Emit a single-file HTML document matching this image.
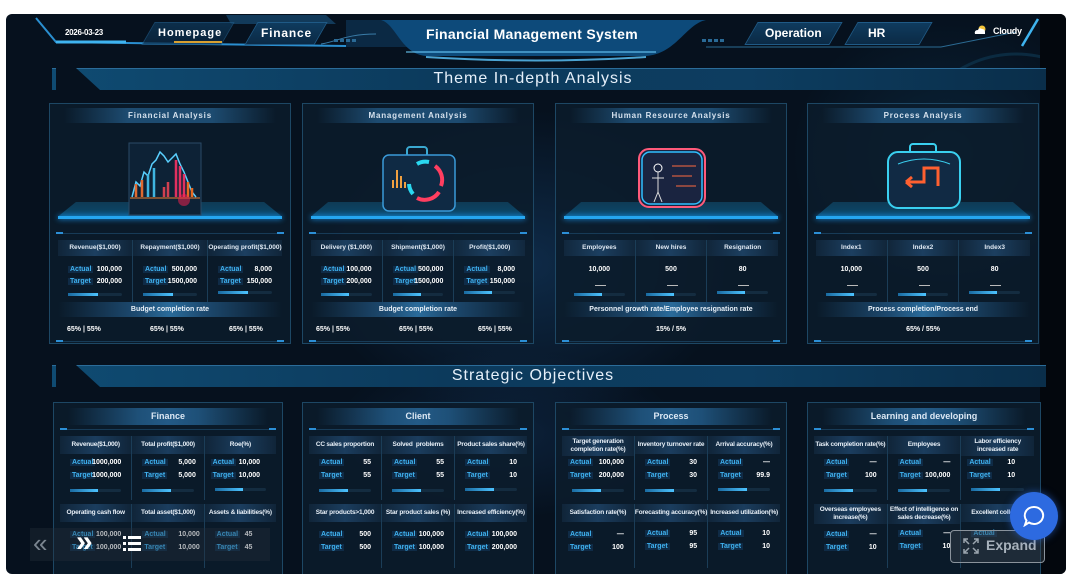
<!DOCTYPE html>
<html><head><meta charset="utf-8"><style>
*{margin:0;padding:0;box-sizing:border-box}
body{width:1072px;height:563px;background:#fff;overflow:hidden;font-family:"Liberation Sans",sans-serif;position:relative}
#app{position:absolute;left:6px;top:14px;width:1060px;height:560px;border-radius:6px;overflow:hidden;
background:radial-gradient(ellipse 300px 220px at 520px 250px,rgba(30,90,150,.35),transparent 70%),radial-gradient(ellipse 220px 200px at 940px 140px,rgba(20,80,120,.3),transparent 70%),radial-gradient(ellipse 250px 120px at 500px 420px,rgba(30,80,140,.25),transparent 70%),#06111e}
.abs{position:absolute}
.t{color:#fff;font-weight:bold;white-space:nowrap}
.tab{position:absolute;top:8px;height:23px;background:linear-gradient(#0f3b5e,#0b2a45);transform:skewX(-30deg);border:1px solid #1f5a86}
.sec{position:absolute;left:46px;width:994px;height:22px;background:linear-gradient(90deg,#0f4b72 0%,#0c3a5c 40%,#0d3d60 70%,#0a2e4a 100%);border-top:1px solid #2b6c99}
.sec span{position:absolute;left:0;right:32px;text-align:center;color:#e6f0fa;font-size:16px;letter-spacing:1px;top:1px}
.card{position:absolute;top:89px;height:241px;background:rgba(12,28,44,.85);border:1px solid #1d4764}
.ctitle{position:absolute;left:14px;right:14px;top:4px;height:15px;background:linear-gradient(90deg,transparent,#1d4b70 30%,#1d4b70 70%,transparent);color:#d6e2ee;font-size:8px;font-weight:bold;letter-spacing:.8px;text-align:center;line-height:15px}
.tick{position:absolute;left:6px;right:6px;height:1px;background:#173b57}
.tick:before,.tick:after{content:"";position:absolute;top:-1px;width:7px;height:2px;background:#2c8fd6}
.tick:before{left:0}.tick:after{right:0}
.plat{position:absolute;left:8px;right:8px;top:98px;height:17px;background:linear-gradient(#0e3a55,#0b4d72);clip-path:polygon(8% 0,92% 0,100% 85%,0 85%)}
.platl{position:absolute;left:8px;right:8px;top:112px;height:3px;background:#25a6f0;box-shadow:0 0 6px #1aa0ff}
.cols{position:absolute;left:8px;right:8px;display:flex}
.col{flex:1;position:relative;height:64px;border-right:1px solid #1b3d57}
.col:last-child{border-right:none}
.hd{height:16px;background:linear-gradient(90deg,rgba(40,80,120,.2),#1c3f60,rgba(40,80,120,.2));color:#dfe8f2;font-size:6.5px;font-weight:bold;text-align:center;line-height:16px;white-space:nowrap;overflow:hidden}
.row{position:absolute;left:10px;right:10px;font-size:7px;font-weight:bold;height:10px}
.row .k{position:absolute;left:0;color:#3fb1ee;background:rgba(20,60,100,.5);padding:0 2px}
.row .v{position:absolute;right:0;color:#fff}
.bar{position:absolute;left:10px;right:10px;height:3px;background:#142c40;border-radius:2px}
.bar:before{content:"";position:absolute;left:0;top:0;height:3px;width:55%;background:linear-gradient(90deg,#1a6aa0,#4cc3ff)}
.band{position:absolute;left:8px;right:8px;height:15px;background:linear-gradient(90deg,transparent,#1d4a70 35%,#2a6b9a 50%,#1d4a70 65%,transparent);color:#e8f0f8;font-size:7px;font-weight:bold;text-align:center;line-height:15px}
.pc{position:absolute;font-size:7px;font-weight:bold;color:#fff;white-space:nowrap}
.bcard{position:absolute;top:388px;height:175px;background:rgba(12,28,44,.85);border:1px solid #1d4764}
.btitle{position:absolute;left:14px;right:14px;top:5px;height:17px;background:linear-gradient(90deg,transparent,#1e5078 35%,#235a86 50%,#1e5078 65%,transparent);color:#dce8f4;font-size:9px;font-weight:bold;text-align:center;line-height:17px}
.bcols{position:absolute;left:6px;right:6px;display:flex}
.bcol{flex:1;position:relative;height:64px;border-right:1px solid #1b3d57}
.bcol:last-child{border-right:none}
.bh{height:18px;background:linear-gradient(90deg,rgba(40,80,120,.2),#1b3d5e,rgba(40,80,120,.2));color:#e6eef6;font-size:6.5px;font-weight:bold;text-align:center;line-height:8px;display:flex;align-items:center;justify-content:center;white-space:nowrap;letter-spacing:-.2px}
</style></head><body>
<div id="app">
<svg class="abs" style="left:0;top:0" width="1060" height="60">
<path d="M30 4 L50 28 L340 32" stroke="#2a8fd0" stroke-width="2" fill="none"/>
<path d="M50 28 L120 28" stroke="#3fb4f0" stroke-width="3"/>
<path d="M220 1 L320 1 L330 10 L225 10Z" fill="#123a5a"/>
<path d="M340 6 L395 6 L410 33 L340 33Z" fill="#0c2c48" opacity=".9"/>
<path d="M375 6 C390 10 395 40 420 42 L640 42 C670 40 680 10 700 6Z" fill="#0d4a7a"/>
<path d="M400 38 L650 38" stroke="#6fd0ff" stroke-width="1.5" opacity=".7"/>
<path d="M420 43 Q530 50 640 43" stroke="#5cc8ff" stroke-width="2" fill="none" opacity=".8"/>
<path d="M315 30 C330 28 340 20 370 20" stroke="#3a7ca8" fill="none"/>
<path d="M700 33 L935 33 L1010 18" stroke="#2b6a92" fill="none"/>
<path d="M1032 5 L1016 32" stroke="#3fb4f0" stroke-width="2.5"/>
<g fill="#2a6a96"><rect x="328" y="25" width="4" height="3"/><rect x="334" y="25" width="4" height="3"/><rect x="340" y="25" width="4" height="3"/><rect x="346" y="25" width="4" height="3"/><rect x="696" y="25" width="4" height="3"/><rect x="702" y="25" width="4" height="3"/><rect x="708" y="25" width="4" height="3"/><rect x="714" y="25" width="4" height="3"/></g>
<circle cx="1010" cy="150" r="110" stroke="#0f3a55" stroke-width="3" fill="none" opacity=".6"/>
</svg>
<div class="tab" style="left:142px;width:80px;opacity:.7"></div>
<div class="tab" style="left:245px;width:70px"></div>
<div class="tab" style="left:745px;width:85px"></div>
<div class="tab" style="left:845px;width:75px"></div>
<div class="abs t" style="left:59px;top:14px;font-size:8px;letter-spacing:-.3px">2026-03-23</div>
<div class="abs t" style="left:152px;top:13px;font-size:11px;letter-spacing:1px">Homepage</div>
<div class="abs" style="left:168px;top:27px;width:48px;height:1.5px;background:#d8a030"></div>
<div class="abs t" style="left:255px;top:12px;font-size:12px;letter-spacing:.8px">Finance</div>
<div class="abs t" style="left:420px;top:12px;font-size:14px;letter-spacing:.3px">Financial Management System</div>
<div class="abs t" style="left:759px;top:12px;font-size:12px">Operation</div>
<div class="abs t" style="left:862px;top:12px;font-size:12px">HR</div>
<svg class="abs" style="left:967px;top:11px" width="14" height="10"><circle cx="9" cy="4" r="3.5" fill="#f3c53a"/><path d="M2 9 Q1 5 5 5 Q6 2 9 4 Q12 4 12 7 L12 9Z" fill="#fff"/></svg>
<div class="abs t" style="left:987px;top:12px;font-size:9px;letter-spacing:-.3px">Cloudy</div>
<div class="abs" style="left:1034px;top:0;width:26px;height:560px;background:#03070d"></div>

<div class="sec" style="top:54px"><span>Theme In-depth Analysis</span></div>
<div class="abs" style="left:50px;top:54px;width:80px;height:22px;background:#06111e;clip-path:polygon(0 0,25% 0,55% 100%,0 100%)"></div>
<div class="sec" style="top:351px"><span>Strategic Objectives</span></div>
<div class="abs" style="left:50px;top:351px;width:80px;height:22px;background:#06111e;clip-path:polygon(0 0,25% 0,55% 100%,0 100%)"></div>

<div class="card" style="left:43px;width:242px">
 <div class="ctitle">Financial Analysis</div>
 <div class="plat"></div><div class="platl"></div>
 <svg class="abs" style="left:78px;top:38px" width="74" height="76"><rect x="1" y="1" width="72" height="72" fill="#0d2236" stroke="#2a4a66"/>
 <path d="M4 55 L8 40 L12 44 L16 30 L20 34 L24 22 L28 18 L32 10 L36 14 L40 20 L44 16 L48 12 L52 22 L56 30 L60 40 L64 50 L68 55" stroke="#5ad0ff" stroke-width="1.5" fill="none"/>
 <g stroke-width="2.5"><path d="M8 55V42M14 55V38" stroke="#e06a30"/><path d="M20 55V32M26 55V26" stroke="#3fb5e0"/><path d="M48 55V18M52 55V24M56 55V32" stroke="#e03060"/><path d="M60 55V40M64 55V46" stroke="#e86a20"/><path d="M36 55V45M40 55V40" stroke="#d04050"/></g>
 <line x1="2" y1="56" x2="72" y2="56" stroke="#f08030"/><circle cx="56" cy="58" r="6" fill="#ff2050" opacity=".5"/></svg>
 <div class="tick" style="top:129px"></div>
 <div class="cols" style="top:136px">
  <div class="col"><div class="hd">Revenue($1,000)</div><div class="row" style="top:26px"><span class="k">Actual</span><span class="v">100,000</span></div><div class="row" style="top:38px"><span class="k">Target</span><span class="v">200,000</span></div><div class="bar" style="top:53px"></div></div>
  <div class="col"><div class="hd">Repayment($1,000)</div><div class="row" style="top:26px"><span class="k">Actual</span><span class="v">500,000</span></div><div class="row" style="top:38px"><span class="k">Target</span><span class="v">1500,000</span></div><div class="bar" style="top:53px"></div></div>
  <div class="col"><div class="hd">Operating profit($1,000)</div><div class="row" style="top:26px"><span class="k">Actual</span><span class="v">8,000</span></div><div class="row" style="top:38px"><span class="k">Target</span><span class="v">150,000</span></div><div class="bar" style="top:51px"></div></div>
 </div>
 <div class="band" style="top:198px">Budget completion rate</div>
 <div class="pc" style="left:17px;top:222px">65% | 55%</div><div class="pc" style="left:100px;top:222px">65% | 55%</div><div class="pc" style="left:179px;top:222px">65% | 55%</div>
 <div class="tick" style="top:237px"></div>
</div>
<div class="card" style="left:296px;width:232px">
 <div class="ctitle">Management Analysis</div>
 <div class="plat"></div><div class="platl"></div>
 <svg class="abs" style="left:78px;top:42px" width="76" height="68"><rect x="26" y="1" width="20" height="10" rx="3" fill="none" stroke="#3aa8d0" stroke-width="2"/><rect x="2" y="9" width="72" height="56" rx="6" fill="#0f2a44" stroke="#3a9ad8" stroke-width="1.5"/>
 <path d="M54 20 A17 17 0 0 1 60 40" stroke="#ff3e60" stroke-width="4" fill="none"/><path d="M58 46 A17 17 0 0 1 36 52" stroke="#ff3e60" stroke-width="4" fill="none"/><path d="M32 48 A17 17 0 0 1 28 38" stroke="#2ad8f0" stroke-width="4" fill="none"/><path d="M36 18 A17 17 0 0 1 48 16" stroke="#2ad8f0" stroke-width="4" fill="none"/>
 <g stroke="#f0a040" stroke-width="2"><path d="M12 42V34M16 42V24M20 42V30M24 42V36"/></g></svg>
 <div class="tick" style="top:129px"></div>
 <div class="cols" style="top:136px">
  <div class="col"><div class="hd">Delivery ($1,000)</div><div class="row" style="top:26px"><span class="k">Actual</span><span class="v">100,000</span></div><div class="row" style="top:38px"><span class="k">Target</span><span class="v">200,000</span></div><div class="bar" style="top:53px"></div></div>
  <div class="col"><div class="hd">Shipment($1,000)</div><div class="row" style="top:26px"><span class="k">Actual</span><span class="v">500,000</span></div><div class="row" style="top:38px"><span class="k">Target</span><span class="v">1500,000</span></div><div class="bar" style="top:53px"></div></div>
  <div class="col"><div class="hd">Profit($1,000)</div><div class="row" style="top:26px"><span class="k">Actual</span><span class="v">8,000</span></div><div class="row" style="top:38px"><span class="k">Target</span><span class="v">150,000</span></div><div class="bar" style="top:51px"></div></div>
 </div>
 <div class="band" style="top:198px">Budget completion rate</div>
 <div class="pc" style="left:13px;top:222px">65% | 55%</div><div class="pc" style="left:96px;top:222px">65% | 55%</div><div class="pc" style="left:175px;top:222px">65% | 55%</div>
 <div class="tick" style="top:237px"></div>
</div>
<div class="card" style="left:549px;width:232px">
 <div class="ctitle">Human Resource Analysis</div>
 <div class="plat"></div><div class="platl"></div>
 <svg class="abs" style="left:80px;top:42px" width="72" height="66"><rect x="3" y="3" width="66" height="58" rx="10" fill="#1a2440" stroke="#ff5a7a" stroke-width="2"/><rect x="6" y="6" width="60" height="52" rx="8" fill="none" stroke="#30c0ff" stroke-width="1.5"/>
 <circle cx="22" cy="22" r="4" fill="none" stroke="#fff"/><path d="M22 26V46M16 32H28M22 46L18 56M22 46L26 56" stroke="#ddd" fill="none"/><path d="M36 20H60M36 30H56M40 40H60" stroke="#ff6a40"/></svg>
 <div class="tick" style="top:129px"></div>
 <div class="cols" style="top:136px">
  <div class="col"><div class="hd">Employees</div><div class="row" style="top:26px;text-align:center"><span class="v" style="left:0;right:0">10,000</span></div><div class="abs" style="left:31px;top:45px;width:11px;height:1px;background:#bbb"></div><div class="bar" style="top:53px"></div></div>
  <div class="col"><div class="hd">New hires</div><div class="row" style="top:26px;text-align:center"><span class="v" style="left:0;right:0">500</span></div><div class="abs" style="left:31px;top:45px;width:11px;height:1px;background:#bbb"></div><div class="bar" style="top:53px"></div></div>
  <div class="col"><div class="hd">Resignation</div><div class="row" style="top:26px;text-align:center"><span class="v" style="left:0;right:0">80</span></div><div class="abs" style="left:31px;top:45px;width:11px;height:1px;background:#bbb"></div><div class="bar" style="top:51px"></div></div>
 </div>
 <div class="band" style="top:198px">Personnel growth rate/Employee resignation rate</div>
 <div class="pc" style="left:0;right:0;text-align:center;top:222px">15% / 5%</div>
 <div class="tick" style="top:237px"></div>
</div>
<div class="card" style="left:801px;width:232px">
 <div class="ctitle">Process Analysis</div>
 <div class="plat"></div><div class="platl"></div>
 <svg class="abs" style="left:76px;top:38px" width="80" height="72"><rect x="26" y="2" width="26" height="10" rx="3" fill="none" stroke="#3ad0f0" stroke-width="2"/><rect x="4" y="10" width="72" height="56" rx="10" fill="#112a44" stroke="#3ad0f0" stroke-width="2"/>
 <path d="M22 40H40V26H54V44M22 40l6-5M22 40l6 5" stroke="#ff6030" stroke-width="3" fill="none"/><path d="M14 22 Q40 12 66 22" stroke="#3ad0f0" fill="none"/></svg>
 <div class="tick" style="top:129px"></div>
 <div class="cols" style="top:136px">
  <div class="col"><div class="hd">Index1</div><div class="row" style="top:26px;text-align:center"><span class="v" style="left:0;right:0">10,000</span></div><div class="abs" style="left:31px;top:45px;width:11px;height:1px;background:#bbb"></div><div class="bar" style="top:53px"></div></div>
  <div class="col"><div class="hd">Index2</div><div class="row" style="top:26px;text-align:center"><span class="v" style="left:0;right:0">500</span></div><div class="abs" style="left:31px;top:45px;width:11px;height:1px;background:#bbb"></div><div class="bar" style="top:53px"></div></div>
  <div class="col"><div class="hd">Index3</div><div class="row" style="top:26px;text-align:center"><span class="v" style="left:0;right:0">80</span></div><div class="abs" style="left:31px;top:45px;width:11px;height:1px;background:#bbb"></div><div class="bar" style="top:51px"></div></div>
 </div>
 <div class="band" style="top:198px">Process completion/Process end</div>
 <div class="pc" style="left:0;right:0;text-align:center;top:222px">65% / 55%</div>
 <div class="tick" style="top:237px"></div>
</div>

<div class="bcard" style="left:47px;width:230px">
 <div class="btitle">Finance</div><div class="tick" style="top:26px"></div>
 <div class="bcols" style="top:33px">
  <div class="bcol"><div class="bh">Revenue($1,000)</div><div class="row" style="top:23px"><span class="k">Actual</span><span class="v">1000,000</span></div><div class="row" style="top:36px"><span class="k">Target</span><span class="v">1000,000</span></div><div class="bar" style="top:53px"></div></div>
  <div class="bcol"><div class="bh">Total profit($1,000)</div><div class="row" style="top:23px"><span class="k">Actual</span><span class="v" style="left:36px">5,000</span></div><div class="row" style="top:36px"><span class="k">Target</span><span class="v" style="left:36px">5,000</span></div><div class="bar" style="top:53px"></div></div>
  <div class="bcol"><div class="bh">Roe(%)</div><div class="row" style="top:23px;left:6px"><span class="k">Actual</span><span class="v" style="left:28px">10,000</span></div><div class="row" style="top:36px;left:6px"><span class="k">Target</span><span class="v" style="left:28px">10,000</span></div><div class="bar" style="top:52px"></div></div>
 </div>
 <div class="bcols" style="top:101px">
  <div class="bcol"><div class="bh">Operating cash flow</div><div class="row" style="top:27px"><span class="k">Actual</span><span class="v">100,000</span></div><div class="row" style="top:40px"><span class="k">Target</span><span class="v">100,000</span></div></div>
  <div class="bcol"><div class="bh">Total asset($1,000)</div><div class="row" style="top:27px"><span class="k">Actual</span><span class="v" style="left:36px">10,000</span></div><div class="row" style="top:40px"><span class="k">Target</span><span class="v" style="left:36px">10,000</span></div></div>
  <div class="bcol"><div class="bh">Assets &amp; liabilities(%)</div><div class="row" style="top:27px"><span class="k">Actual</span><span class="v" style="left:30px">45</span></div><div class="row" style="top:40px"><span class="k">Target</span><span class="v" style="left:30px">45</span></div></div>
 </div>
</div>
<div class="bcard" style="left:296px;width:232px">
 <div class="btitle">Client</div><div class="tick" style="top:26px"></div>
 <div class="bcols" style="top:33px">
  <div class="bcol"><div class="bh">CC sales proportion</div><div class="row" style="top:23px"><span class="k">Actual</span><span class="v">55</span></div><div class="row" style="top:36px"><span class="k">Target</span><span class="v">55</span></div><div class="bar" style="top:53px"></div></div>
  <div class="bcol"><div class="bh">Solved &nbsp;problems</div><div class="row" style="top:23px"><span class="k">Actual</span><span class="v">55</span></div><div class="row" style="top:36px"><span class="k">Target</span><span class="v">55</span></div><div class="bar" style="top:53px"></div></div>
  <div class="bcol"><div class="bh">Product sales share(%)</div><div class="row" style="top:23px"><span class="k">Actual</span><span class="v">10</span></div><div class="row" style="top:36px"><span class="k">Target</span><span class="v">10</span></div><div class="bar" style="top:52px"></div></div>
 </div>
 <div class="bcols" style="top:101px">
  <div class="bcol"><div class="bh">Star products&gt;1,000</div><div class="row" style="top:27px"><span class="k">Actual</span><span class="v">500</span></div><div class="row" style="top:40px"><span class="k">Target</span><span class="v">500</span></div></div>
  <div class="bcol"><div class="bh">Star product sales (%)</div><div class="row" style="top:27px"><span class="k">Actual</span><span class="v">100,000</span></div><div class="row" style="top:40px"><span class="k">Target</span><span class="v">100,000</span></div></div>
  <div class="bcol"><div class="bh">Increased efficiency(%)</div><div class="row" style="top:27px"><span class="k">Actual</span><span class="v">100,000</span></div><div class="row" style="top:40px"><span class="k">Target</span><span class="v">200,000</span></div></div>
 </div>
</div>
<div class="bcard" style="left:549px;width:232px">
 <div class="btitle">Process</div><div class="tick" style="top:26px"></div>
 <div class="bcols" style="top:33px">
  <div class="bcol"><div class="bh" style="white-space:normal;height:20px">Target generation completion rate(%)</div><div class="row" style="top:23px;left:6px"><span class="k">Actual</span><span class="v">100,000</span></div><div class="row" style="top:36px;left:6px"><span class="k">Target</span><span class="v">200,000</span></div><div class="bar" style="top:53px"></div></div>
  <div class="bcol"><div class="bh">Inventory turnover rate</div><div class="row" style="top:23px"><span class="k">Actual</span><span class="v">30</span></div><div class="row" style="top:36px"><span class="k">Target</span><span class="v">30</span></div><div class="bar" style="top:53px"></div></div>
  <div class="bcol"><div class="bh">Arrival accuracy(%)</div><div class="row" style="top:23px"><span class="k">Actual</span><span class="v">—</span></div><div class="row" style="top:36px"><span class="k">Target</span><span class="v">99.9</span></div><div class="bar" style="top:52px"></div></div>
 </div>
 <div class="bcols" style="top:101px">
  <div class="bcol"><div class="bh">Satisfaction rate(%)</div><div class="row" style="top:27px;left:6px"><span class="k">Actual</span><span class="v">—</span></div><div class="row" style="top:40px;left:6px"><span class="k">Target</span><span class="v">100</span></div></div>
  <div class="bcol"><div class="bh">Forecasting accuracy(%)</div><div class="row" style="top:26px"><span class="k">Actual</span><span class="v">95</span></div><div class="row" style="top:39px"><span class="k">Target</span><span class="v">95</span></div></div>
  <div class="bcol"><div class="bh">Increased utilization(%)</div><div class="row" style="top:26px"><span class="k">Actual</span><span class="v">10</span></div><div class="row" style="top:39px"><span class="k">Target</span><span class="v">10</span></div></div>
 </div>
</div>
<div class="bcard" style="left:801px;width:234px">
 <div class="btitle">Learning and developing</div><div class="tick" style="top:26px"></div>
 <div class="bcols" style="top:33px">
  <div class="bcol"><div class="bh">Task completion rate(%)</div><div class="row" style="top:23px"><span class="k">Actual</span><span class="v">—</span></div><div class="row" style="top:36px"><span class="k">Target</span><span class="v">100</span></div><div class="bar" style="top:53px"></div></div>
  <div class="bcol"><div class="bh">Employees</div><div class="row" style="top:23px"><span class="k">Actual</span><span class="v">—</span></div><div class="row" style="top:36px"><span class="k">Target</span><span class="v">100,000</span></div><div class="bar" style="top:53px"></div></div>
  <div class="bcol"><div class="bh" style="white-space:normal;height:20px">Labor efficiency increased rate</div><div class="row" style="top:23px;left:6px"><span class="k">Actual</span><span class="v" style="left:40px">10</span></div><div class="row" style="top:36px;left:6px"><span class="k">Target</span><span class="v" style="left:40px">10</span></div><div class="bar" style="top:52px"></div></div>
 </div>
 <div class="bcols" style="top:101px">
  <div class="bcol"><div class="bh" style="white-space:normal;height:20px">Overseas employees increase(%)</div><div class="row" style="top:27px"><span class="k">Actual</span><span class="v">—</span></div><div class="row" style="top:40px"><span class="k">Target</span><span class="v">10</span></div></div>
  <div class="bcol"><div class="bh" style="white-space:normal;height:20px">Effect of intelligence on sales decrease(%)</div><div class="row" style="top:26px"><span class="k">Actual</span><span class="v">—</span></div><div class="row" style="top:39px"><span class="k">Target</span><span class="v">10</span></div></div>
  <div class="bcol"><div class="bh">Excellent colleges</div><div class="row" style="top:26px"><span class="k">Actual</span></div></div>
 </div>
</div>

<div class="abs" style="left:24px;top:514px;width:240px;height:33px;background:rgba(40,50,60,.35)"></div>
<div class="abs" style="left:27px;top:516px;color:#7a8590;font-size:26px;line-height:26px">«</div>
<div class="abs" style="left:70px;top:514px;color:#fff;font-size:30px;line-height:28px;font-weight:bold">»</div>
<svg class="abs" style="left:117px;top:521px" width="18" height="16"><g fill="#fff"><rect x="0" y="1" width="3" height="3"/><rect x="5" y="1" width="13" height="3"/><rect x="0" y="7" width="3" height="3"/><rect x="5" y="7" width="13" height="3"/><rect x="0" y="13" width="3" height="3"/><rect x="5" y="13" width="13" height="3"/></g></svg>
<div class="abs" style="left:944px;top:516px;width:95px;height:33px;border:1px solid #8a939c;border-radius:4px;background:rgba(60,70,80,.4)"></div>
<svg class="abs" style="left:957px;top:524px" width="16" height="16" fill="none" stroke="#9aa4ae" stroke-width="1.5"><path d="M1 5V1H5M11 1H15V5M15 11V15H11M5 15H1V11M1 1L6 6M15 1L10 6M15 15L10 10M1 15L6 10"/></svg>
<div class="abs" style="left:980px;top:523px;color:#a8b2bc;font-size:14px;font-weight:bold">Expand</div>
<div class="abs" style="left:1004px;top:478px;width:48px;height:48px;border-radius:50%;background:#2d6ae0;box-shadow:0 0 8px rgba(45,106,224,.6)"></div>
<svg class="abs" style="left:1017px;top:491px" width="22" height="22" fill="none" stroke="#fff" stroke-width="2"><path d="M11 2a9 8.5 0 1 1-5 15.5L2 20l1.5-4.5A9 8.5 0 0 1 11 2z"/></svg>
</div>
</body></html>
